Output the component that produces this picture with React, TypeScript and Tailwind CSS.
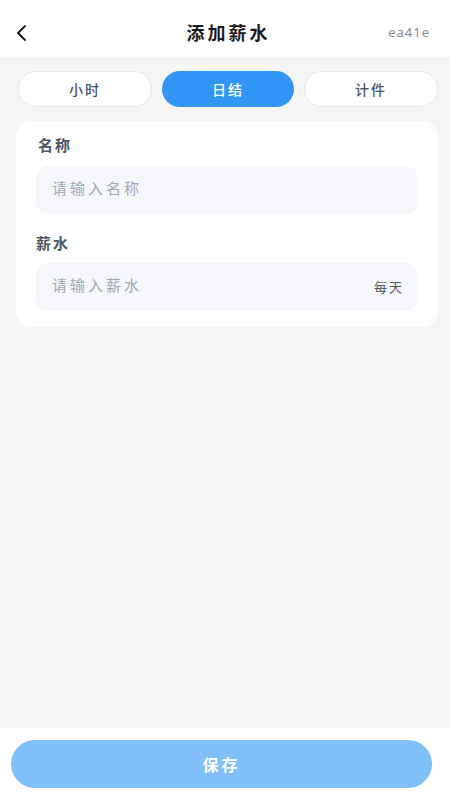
import React from "react";

const font = { fontFamily: '"Noto Sans CJK SC", "Noto Sans", sans-serif' };

export default function App() {
  return (
    <div className="w-[450px] h-[800px] flex flex-col bg-white" style={font}>
      <div className="h-[57px] flex items-center justify-between pl-[14px] pr-[20px] pt-[8px] bg-white">
        <svg width="16" height="18" viewBox="0 0 16 18" className="ml-[1px]">
          <path d="M10 2 L3 9 L10 16" fill="none" stroke="#111" strokeWidth="1.8" strokeLinecap="round" strokeLinejoin="round" />
        </svg>
        <div className="text-[18px] font-bold text-[#1a1a1a] tracking-[3px] ml-[46px]">添加薪水</div>
        <div className="text-[13px] text-[#8a8a8a] tracking-[1px] w-[50px] text-right" style={{ fontFamily: '"Noto Sans", sans-serif' }}>ea41e</div>
      </div>
      <div className="flex-1 bg-[#f5f5f5] flex flex-col pl-[16px] pr-[12px] pt-[14px]">
        <div className="flex gap-[10px] pl-[2px]">
          <div className="flex-1 h-[36px] rounded-full bg-white border border-[#e5e7eb] flex items-center justify-center text-[14px] font-medium text-[#4b5563] tracking-[2px]">小时</div>
          <div className="flex-1 h-[36px] rounded-full bg-[#3196f5] flex items-center justify-center text-[14px] font-medium text-white tracking-[2px]">日结</div>
          <div className="flex-1 h-[36px] rounded-full bg-white border border-[#e5e7eb] flex items-center justify-center text-[14px] font-medium text-[#4b5563] tracking-[2px]">计件</div>
        </div>
        <div className="mt-[14px] bg-white rounded-[16px] px-[20px] pt-[13px] pb-[16px] flex flex-col">
          <div className="text-[15px] font-semibold text-[#4b5563] tracking-[2px] ml-[2px]">名称</div>
          <div className="mt-[9px] h-[48px] rounded-[12px] bg-[#f5f7fa] flex items-center px-[16px] pb-[3px] text-[15px] text-[#a0a8b8] tracking-[3px]">请输入名称</div>
          <div className="mt-[18px] text-[15px] font-semibold text-[#4b5563] tracking-[2px]">薪水</div>
          <div className="mt-[9px] h-[48px] rounded-[12px] bg-[#f5f7fa] flex items-center justify-between px-[16px] text-[15px] tracking-[3px]">
            <span className="text-[#a0a8b8] pb-[3px]">请输入薪水</span>
            <span className="text-[13px] text-[#4b5563] tracking-[2px] mr-[-2px]">每天</span>
          </div>
        </div>
      </div>
      <div className="h-[72px] bg-white flex items-center pl-[11px] pr-[18px]">
        <div className="flex-1 h-[48px] rounded-full bg-[#80bff9] flex items-center justify-center text-[16px] font-semibold text-white tracking-[3px]">保存</div>
      </div>
    </div>
  );
}
